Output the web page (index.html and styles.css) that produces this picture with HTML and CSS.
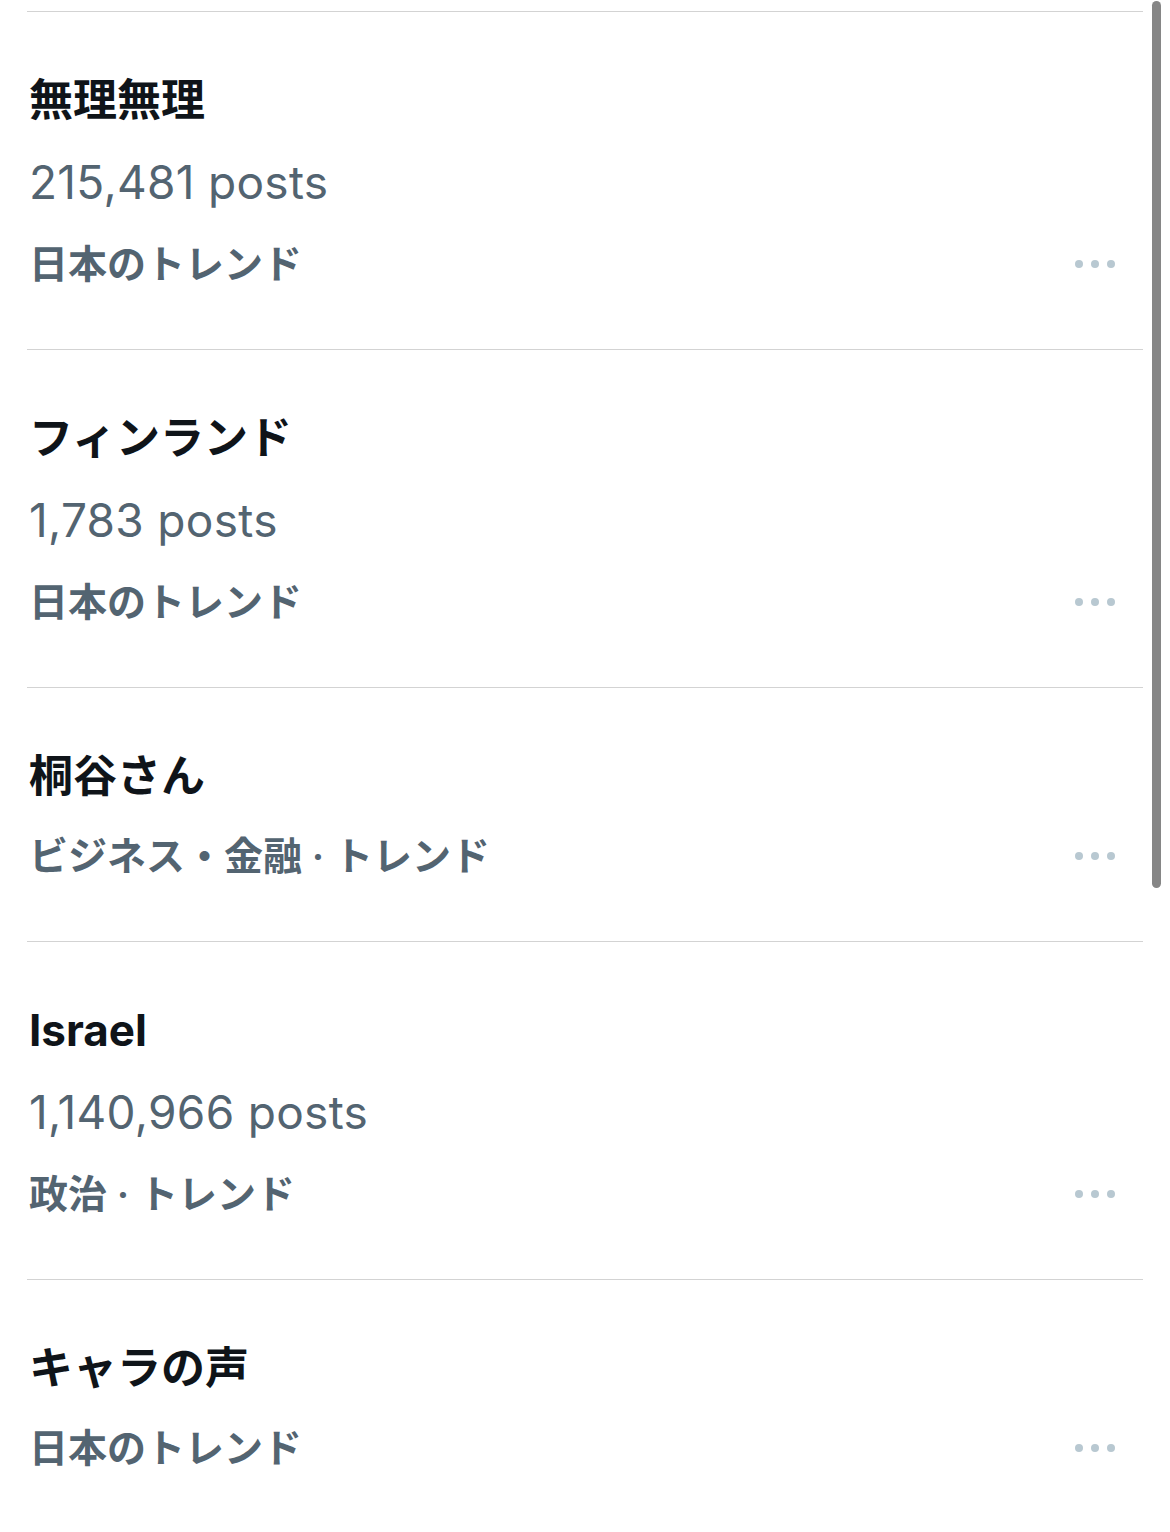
FILE: index.html
```html
<!DOCTYPE html>
<html lang="ja">
<head>
<meta charset="utf-8">
<link rel="stylesheet" href="styles.css">
</head>
<body>
<div class="page">
  <ul class="trends">
    <li class="trend">
      <div class="title">無理無理</div>
      <div class="count">215,481 posts</div>
      <div class="meta"><span>日本のトレンド</span><span class="more"><i></i><i></i><i></i></span></div>
    </li>
    <li class="trend">
      <div class="title">フィンランド</div>
      <div class="count">1,783 posts</div>
      <div class="meta"><span>日本のトレンド</span><span class="more"><i></i><i></i><i></i></span></div>
    </li>
    <li class="trend">
      <div class="title">桐谷さん</div>
      <div class="meta"><span>ビジネス・金融 · トレンド</span><span class="more"><i></i><i></i><i></i></span></div>
    </li>
    <li class="trend">
      <div class="title">Israel</div>
      <div class="count">1,140,966 posts</div>
      <div class="meta"><span>政治 · トレンド</span><span class="more"><i></i><i></i><i></i></span></div>
    </li>
    <li class="trend">
      <div class="title">キャラの声</div>
      <div class="meta"><span>日本のトレンド</span><span class="more"><i></i><i></i><i></i></span></div>
    </li>
  </ul>
  <div class="scrollbar"></div>
</div>
</body>
</html>
```
FILE: styles.css
```css
html, body {
  margin: 0;
  padding: 0;
  background: #ffffff;
}
body {
  width: 1170px;
  height: 1532px;
  overflow: hidden;
  font-family: "Inter", "Noto Sans CJK JP", sans-serif;
}
.page {
  position: relative;
  height: 1532px;
}
.trends {
  list-style: none;
  margin: 11px 0 0 27px;
  padding: 0;
  width: 1116px;
}
.trend {
  border-top: 1px solid #d3d3d3;
  padding: 48px 28px 45px 2px;
  display: flex;
  flex-direction: column;
}
.title {
  font-size: 44px;
  font-weight: 700;
  line-height: 80px;
  color: #0f1419;
}
.count {
  font-size: 46px;
  letter-spacing: 0.3px;
  line-height: 84px;
  color: #536471;
}
.meta {
  display: flex;
  justify-content: space-between;
  align-items: center;
  font-size: 39px;
  line-height: 80px;
  font-weight: 600;
  color: #536471;
}
.more {
  display: flex;
  gap: 8px;
}
.more i {
  display: block;
  width: 8px;
  height: 8px;
  border-radius: 50%;
  background: #b8c8d1;
}
.scrollbar {
  position: absolute;
  left: 1152px;
  top: -10px;
  width: 9px;
  height: 887px;
  border-radius: 5px;
  background: #868686;
}
```
